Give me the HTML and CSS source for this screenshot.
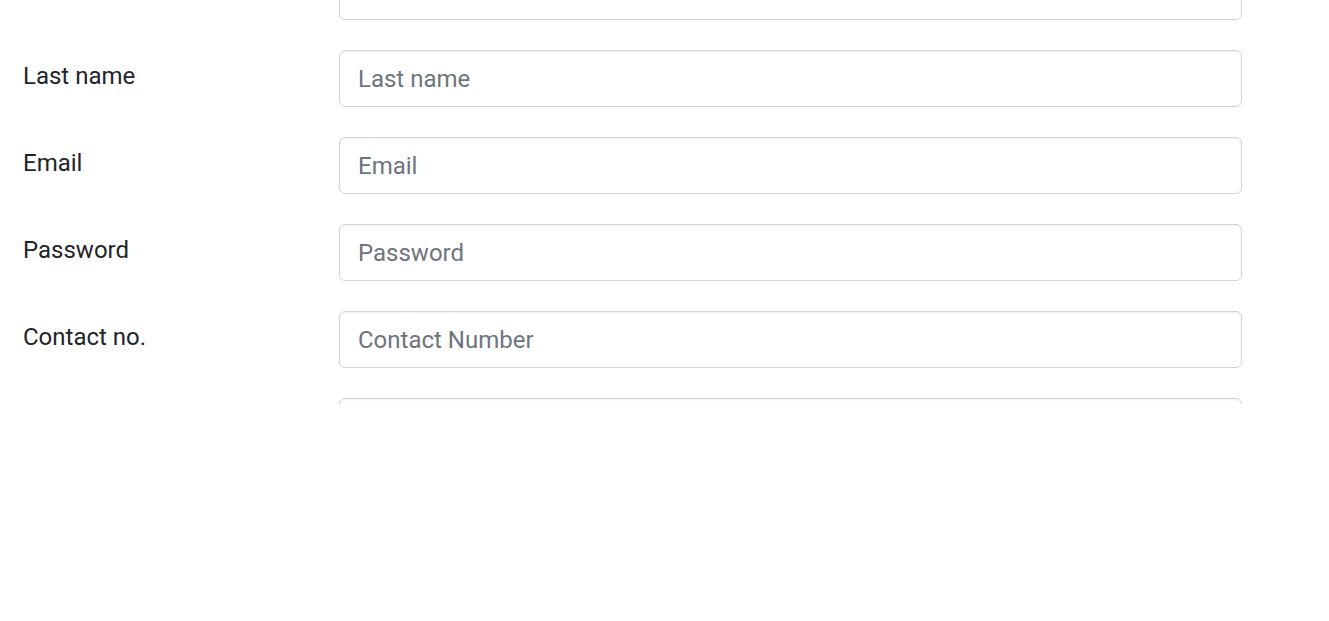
FILE: index.html
```html
<!DOCTYPE html>
<html lang="en">
<head>
<meta charset="utf-8">
<title>Register</title>
<link rel="stylesheet" href="styles.css">
</head>
<body>
<div class="viewport">
  <form class="form">
    <div class="row">
      <label class="label" for="fn">First name</label>
      <input class="control" id="fn" type="text" placeholder="First name">
    </div>
    <div class="row">
      <label class="label" for="ln">Last name</label>
      <input class="control" id="ln" type="text" placeholder="Last name">
    </div>
    <div class="row">
      <label class="label" for="em">Email</label>
      <input class="control" id="em" type="email" placeholder="Email">
    </div>
    <div class="row">
      <label class="label" for="pw">Password</label>
      <input class="control" id="pw" type="password" placeholder="Password">
    </div>
    <div class="row">
      <label class="label" for="cn">Contact no.</label>
      <input class="control" id="cn" type="text" placeholder="Contact Number">
    </div>
    <div class="row">
      <label class="label" for="ad">Address</label>
      <input class="control" id="ad" type="text" placeholder="Address">
    </div>
  </form>
</div>
</body>
</html>
```

FILE: styles.css
```css
html, body {
  margin: 0;
  padding: 0;
  background: #ffffff;
}

body {
  font-family: Roboto, "Liberation Sans", Arial, sans-serif;
  font-size: 24px;
  line-height: 1.5;
  color: #212529;
}

.viewport {
  height: 404px;
  overflow: hidden;
}

.form {
  margin-top: -37px;
  padding-left: 23px;
  display: flex;
  flex-direction: column;
  gap: 30px;
}

.row {
  display: grid;
  grid-template-columns: 316px 903px;
  align-items: start;
}

.label {
  padding-top: 8px;
  font-size: 24px;
  line-height: 36px;
  color: #212529;
}

.control {
  box-sizing: border-box;
  width: 903px;
  height: 57px;
  margin: 0;
  padding: 9.5px 18px;
  font-family: Roboto, "Liberation Sans", Arial, sans-serif;
  font-size: 24px;
  line-height: 36px;
  color: #495057;
  background: #ffffff;
  border: 1px solid #ced4da;
  border-radius: 6px;
  box-shadow: inset 0 1px 2px rgba(0, 0, 0, 0.06);
  outline: none;
}

.control::placeholder {
  color: #6c757d;
  opacity: 1;
}
```
